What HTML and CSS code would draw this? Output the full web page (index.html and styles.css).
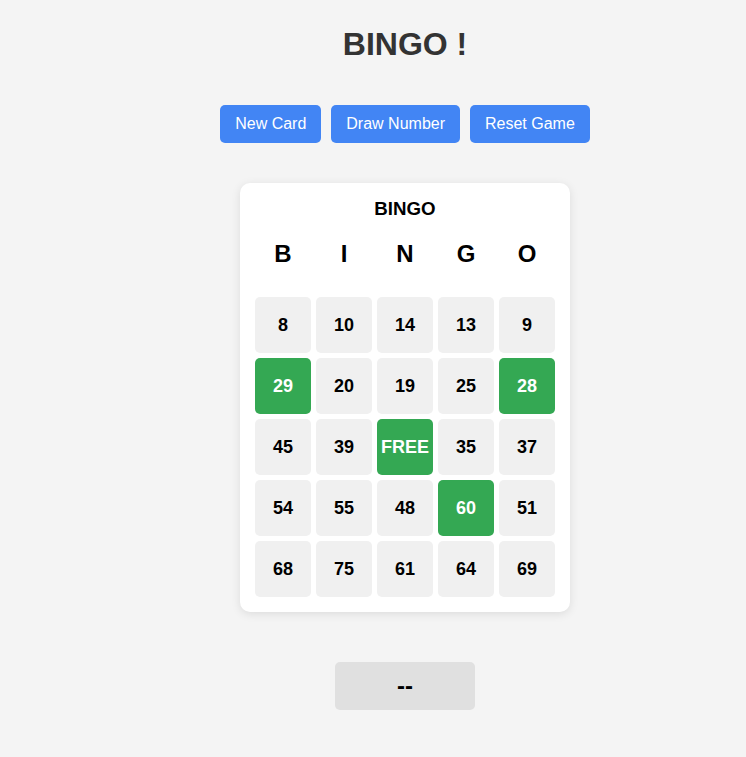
FILE: index.html
```html
<!DOCTYPE html>
<html lang="en">
<head>
<meta charset="utf-8">
<title>Bingo</title>
<link rel="stylesheet" href="styles.css">
</head>
<body>
<div class="page">
  <h1 class="title">BINGO !</h1>
  <div class="controls">
    <button class="btn">New Card</button>
    <button class="btn">Draw Number</button>
    <button class="btn">Reset Game</button>
  </div>
  <div class="card">
    <h3 class="card-title">BINGO</h3>
    <div class="letters">
      <span>B</span><span>I</span><span>N</span><span>G</span><span>O</span>
    </div>
    <div class="grid">
      <div class="cell">8</div><div class="cell">10</div><div class="cell">14</div><div class="cell">13</div><div class="cell">9</div>
      <div class="cell marked">29</div><div class="cell">20</div><div class="cell">19</div><div class="cell">25</div><div class="cell marked">28</div>
      <div class="cell">45</div><div class="cell">39</div><div class="cell marked">FREE</div><div class="cell">35</div><div class="cell">37</div>
      <div class="cell">54</div><div class="cell">55</div><div class="cell">48</div><div class="cell marked">60</div><div class="cell">51</div>
      <div class="cell">68</div><div class="cell">75</div><div class="cell">61</div><div class="cell">64</div><div class="cell">69</div>
    </div>
  </div>
  <div class="drawn">--</div>
</div>
</body>
</html>
```
FILE: styles.css
```css
html, body {
  margin: 0;
  padding: 0;
  background: #f4f4f4;
  font-family: "Liberation Sans", Arial, sans-serif;
}
.page {
  padding: 26px 0 0 64px;
  display: flex;
  flex-direction: column;
  align-items: center;
}
.title {
  margin: 0 0 42px;
  font-size: 32px;
  font-weight: bold;
  color: #333;
  line-height: 37px;
}
.controls {
  display: flex;
  gap: 10px;
  margin-bottom: 40px;
}
.btn {
  font-family: "Liberation Sans", Arial, sans-serif;
  font-size: 16px;
  line-height: 18px;
  padding: 10px 15px;
  border: none;
  border-radius: 5px;
  background: #4285f4;
  color: #fff;
}
.card {
  background: #fff;
  border-radius: 10px;
  padding: 15px;
  box-shadow: 0 2px 10px rgba(0, 0, 0, 0.1);
  display: flex;
  flex-direction: column;
  align-items: center;
}
.card-title {
  margin: 0 0 21px;
  font-size: 18.72px;
  line-height: 21px;
  color: #000;
}
.letters {
  display: grid;
  grid-template-columns: repeat(5, 56px);
  gap: 5px;
  margin-bottom: 29px;
}
.letters span {
  text-align: center;
  font-size: 24px;
  font-weight: bold;
  line-height: 28px;
  color: #000;
}
.grid {
  display: grid;
  grid-template-columns: repeat(5, 56px);
  grid-auto-rows: 56px;
  gap: 5px;
}
.cell {
  background: #f0f0f0;
  border-radius: 5px;
  display: flex;
  align-items: center;
  justify-content: center;
  font-size: 18px;
  font-weight: bold;
  color: #000;
}
.cell.marked {
  background: #34a853;
  color: #fff;
}
.drawn {
  margin-top: 50px;
  width: 140px;
  height: 48px;
  background: #e0e0e0;
  border-radius: 5px;
  display: flex;
  align-items: center;
  justify-content: center;
  font-size: 24px;
  font-weight: bold;
  color: #000;
}
```
